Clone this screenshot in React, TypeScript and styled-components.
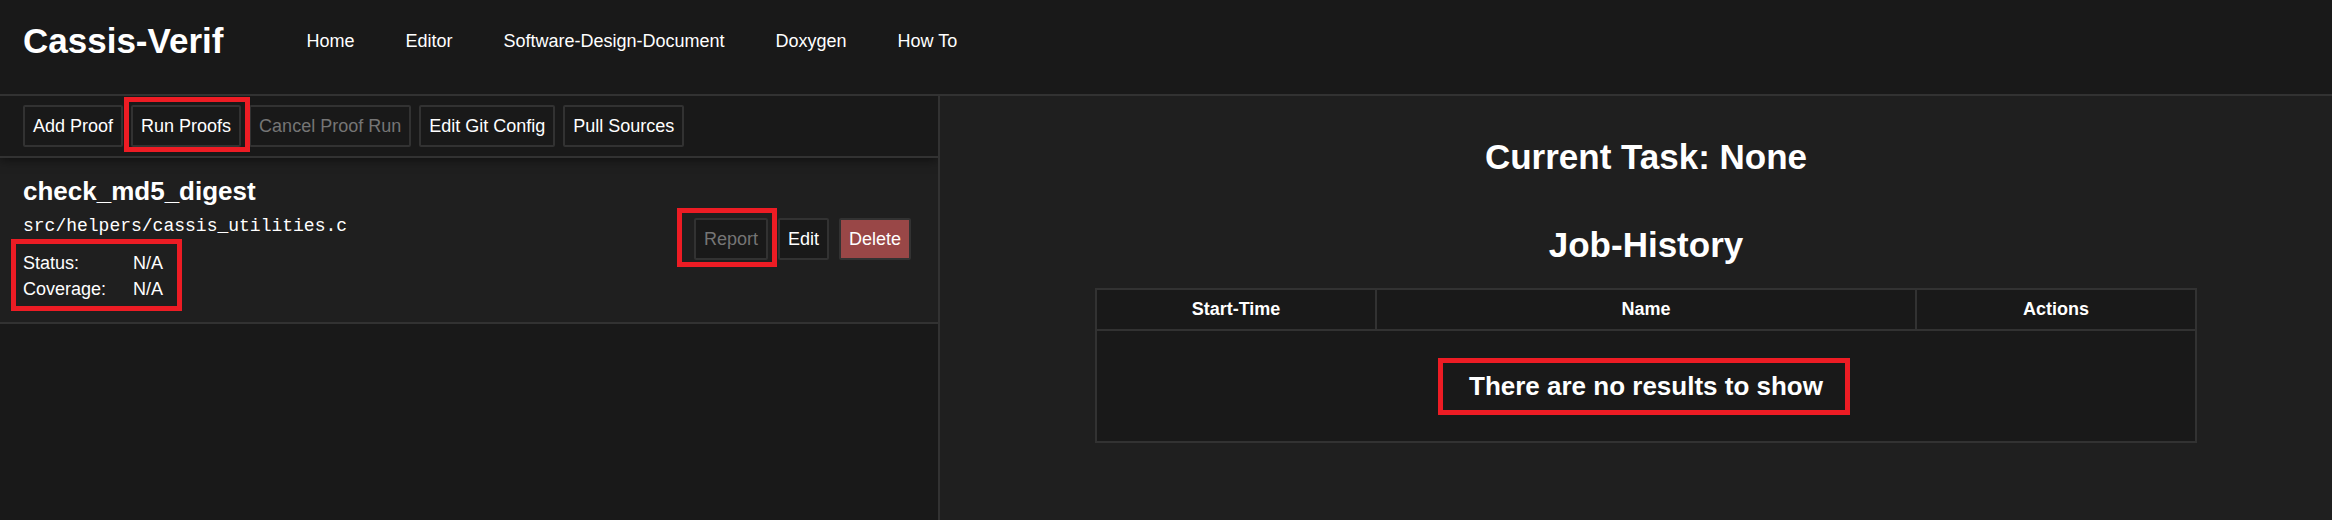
import React from "react";
import styled, { createGlobalStyle, ThemeProvider, DefaultTheme } from "styled-components";

const theme = {
  base: "#191919",
  raised: "#1f1f1f",
  line: "#323232",
  text: "#ffffff",
  muted: "#757575",
  danger: "#994747",
  mark: "#ed1c24",
};

type Theme = typeof theme;
const c = (key: keyof Theme) => (p: { theme: DefaultTheme }) => (p.theme as Theme)[key];

const GlobalStyle = createGlobalStyle`
  *, *::before, *::after { box-sizing: border-box; }
  body {
    margin: 0;
    background: ${c("base")};
    color: ${c("text")};
    font: 18px/26px Arial, "Liberation Sans", sans-serif;
  }
  h1, h2, h3, p, dl, dd { margin: 0; }
`;

const Page = styled.div`
  display: flex;
  flex-direction: column;
  min-height: 100vh;
`;

const Header = styled.header`
  display: flex;
  align-items: center;
  gap: 83px;
  padding: 21px 23px 33px;
  border-bottom: 2px solid ${c("line")};
`;

const Heading = styled.h2`
  font-size: 35px;
  line-height: 40px;
  font-weight: 700;
`;

const SubHeading = styled.h3`
  font-size: 26px;
  line-height: 30px;
  font-weight: 700;
`;

const Nav = styled.nav`
  display: flex;
  gap: 51px;
`;

const NavLink = styled.a`
  color: inherit;
  text-decoration: none;
`;

const Main = styled.main`
  flex: 1;
  display: grid;
  grid-template-columns: 235fr 348fr;
`;

const ProofPanel = styled.section`
  border-right: 2px solid ${c("line")};
`;

const Toolbar = styled.div`
  position: relative;
  display: flex;
  gap: 8px;
  padding: 9px 23px;
  border-bottom: 2px solid ${c("line")};
  box-shadow: 0 2px 10px rgba(0, 0, 0, 0.5);
  clip-path: inset(0 0 -16px 0);
`;

const Button = styled.button<{ $danger?: boolean }>`
  padding: 6px 8px;
  border: 2px solid ${c("line")};
  border-radius: 2px;
  background: ${(p) => c(p.$danger ? "danger" : "base")(p)};
  color: ${c("text")};
  font: inherit;
  white-space: nowrap;

  &:disabled {
    color: ${c("muted")};
  }
`;

/* Highlight frame drawn over its content; $reach is the frame's inset. */
const Marked = styled.div<{ $reach: string }>`
  position: relative;
  z-index: 1;
  display: flex;
  width: fit-content;

  &::after {
    content: "";
    position: absolute;
    inset: ${(p) => p.$reach};
    border: 5px solid ${c("mark")};
    pointer-events: none;
  }
`;

const ProofCard = styled.article`
  display: flex;
  align-items: center;
  justify-content: space-between;
  padding: 18px 27px 20px 23px;
  background: ${c("raised")};
  border-bottom: 2px solid ${c("line")};
`;

const SourcePath = styled.p`
  margin: 7px 0 11px;
  font-family: "Liberation Mono", "Courier New", monospace;
`;

const Facts = styled.dl`
  display: grid;
  grid-template-columns: 110px auto;
`;

const Actions = styled.div`
  display: flex;
  gap: 10px;
`;

const JobPanel = styled.section`
  display: flex;
  flex-direction: column;
  align-items: center;
  padding: 41px 135px 41px 155px;
  background: ${c("raised")};
`;

const HistoryHeading = styled(Heading)`
  margin: 48px 0 23px;
`;

const JobTable = styled.table`
  width: 100%;
  table-layout: fixed;
  border-collapse: collapse;
  background: ${c("base")};
  text-align: center;
`;

const HeadCell = styled.th<{ $side?: boolean }>`
  width: ${(p) => (p.$side ? "280px" : "auto")};
  padding: 6px 8px 7px;
  border: 2px solid ${c("line")};
`;

const EmptyCell = styled.td`
  padding: 40px 8px;
  border: 2px solid ${c("line")};
`;

const EmptyMark = styled(Marked)`
  margin: 0 auto;
`;

const links = ["Home", "Editor", "Software-Design-Document", "Doxygen", "How To"];

export default function App() {
  return (
    <ThemeProvider theme={theme}>
      <GlobalStyle />
      <Page>
        <Header>
          <Heading as="h1">Cassis-Verif</Heading>
          <Nav>
            {links.map((label) => (
              <NavLink href="#" key={label}>{label}</NavLink>
            ))}
          </Nav>
        </Header>
        <Main>
          <ProofPanel>
            <Toolbar>
              <Button>Add Proof</Button>
              <Marked $reach="-8px -9px -5px -7px">
                <Button>Run Proofs</Button>
              </Marked>
              <Button disabled>Cancel Proof Run</Button>
              <Button>Edit Git Config</Button>
              <Button>Pull Sources</Button>
            </Toolbar>
            <ProofCard>
              <div>
                <SubHeading>check_md5_digest</SubHeading>
                <SourcePath>src/helpers/cassis_utilities.c</SourcePath>
                <Marked $reach="-11px -19px -9px -12px">
                  <Facts>
                    <dt>Status:</dt>
                    <dd>N/A</dd>
                    <dt>Coverage:</dt>
                    <dd>N/A</dd>
                  </Facts>
                </Marked>
              </div>
              <Actions>
                <Marked $reach="-10px -9px -7px -17px">
                  <Button disabled>Report</Button>
                </Marked>
                <Button>Edit</Button>
                <Button $danger>Delete</Button>
              </Actions>
            </ProofCard>
          </ProofPanel>
          <JobPanel>
            <Heading>Current Task: None</Heading>
            <HistoryHeading>Job-History</HistoryHeading>
            <JobTable>
              <thead>
                <tr>
                  <HeadCell scope="col" $side>Start-Time</HeadCell>
                  <HeadCell scope="col">Name</HeadCell>
                  <HeadCell scope="col" $side>Actions</HeadCell>
                </tr>
              </thead>
              <tbody>
                <tr>
                  <EmptyCell colSpan={3}>
                    <EmptyMark $reach="-13px -27px -14px -31px">
                      <SubHeading>There are no results to show</SubHeading>
                    </EmptyMark>
                  </EmptyCell>
                </tr>
              </tbody>
            </JobTable>
          </JobPanel>
        </Main>
      </Page>
    </ThemeProvider>
  );
}
